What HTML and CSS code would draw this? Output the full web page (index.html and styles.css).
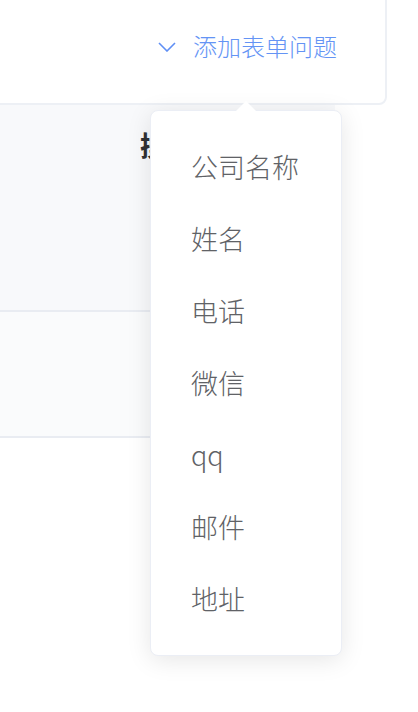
FILE: index.html
```html
<!DOCTYPE html>
<html>
<head>
	<meta charset="utf-8">
	<title>表单问题</title>
	<link rel="stylesheet" href="styles.css">
</head>
<body>
	<div class="card">
		<div class="toolbar">
			<button class="add-btn">
				<svg class="chevron" width="18" height="10" viewBox="0 0 18 10">
					<polyline points="1,1 9,9 17,1" fill="none" stroke="#5f8ff5" stroke-width="1.6"/>
				</svg>
				<span>添加表单问题</span>
			</button>
		</div>
	</div>
	<div class="table">
		<div class="thead">
			<div class="th">操作</div>
		</div>
		<div class="row"></div>
	</div>
	<div class="dropdown">
		<div class="arrow"></div>
		<ul class="menu">
			<li>公司名称</li>
			<li>姓名</li>
			<li>电话</li>
			<li>微信</li>
			<li>qq</li>
			<li>邮件</li>
			<li>地址</li>
		</ul>
	</div>
</body>
</html>
```

FILE: styles.css
```css
body,html{
	margin: 0;
	padding: 0;
	background: #fff;
}
*{
	font-family: "Noto Sans CJK SC", "Noto Sans", sans-serif;
	box-sizing: border-box;
}
.card{
	margin: -10px 0 0 -10px;
	width: 397px;
	height: 115px;
	border: 2px solid #edf0f5;
	border-radius: 8px;
	background: #fff;
	display: flex;
	flex-direction: column;
	justify-content: center;
}
.toolbar{
	display: flex;
	justify-content: flex-end;
	padding-right: 48px;
	padding-bottom: 4px;
}
.add-btn{
	display: flex;
	align-items: center;
	gap: 17px;
	background: none;
	border: none;
	padding: 0;
	color: #6494f5;
	font-size: 24px;
	font-weight: 300;
	line-height: 34px;
}
.chevron{
	margin-top: 2px;
}
.table{
	width: 335px;
}
.thead{
	height: 207px;
	background: #f8f9fb;
	border-bottom: 2px solid #e9ecf2;
	padding: 20px 0 0 140px;
}
.th{
	font-size: 28px;
	font-weight: bold;
	color: #303133;
	line-height: 40px;
	white-space: nowrap;
}
.row{
	height: 126px;
	background: #fafbfc;
	border-bottom: 2px solid #e9ecf2;
}
.dropdown{
	position: absolute;
	left: 150px;
	top: 110px;
	width: 192px;
	background: #fff;
	border: 1px solid #ebeef5;
	border-radius: 8px;
	box-shadow: 0 4px 24px rgba(0, 0, 0, 0.1);
}
.arrow{
	position: absolute;
	top: -10px;
	left: 85px;
	width: 0;
	height: 0;
	border-left: 10px solid transparent;
	border-right: 10px solid transparent;
	border-bottom: 10px solid #fff;
}
.menu{
	list-style: none;
	margin: 0;
	padding: 20px 0;
}
.menu li{
	padding: 0 40px;
	line-height: 72px;
	font-size: 27px;
	font-weight: 300;
	color: #606266;
	white-space: nowrap;
}
```
